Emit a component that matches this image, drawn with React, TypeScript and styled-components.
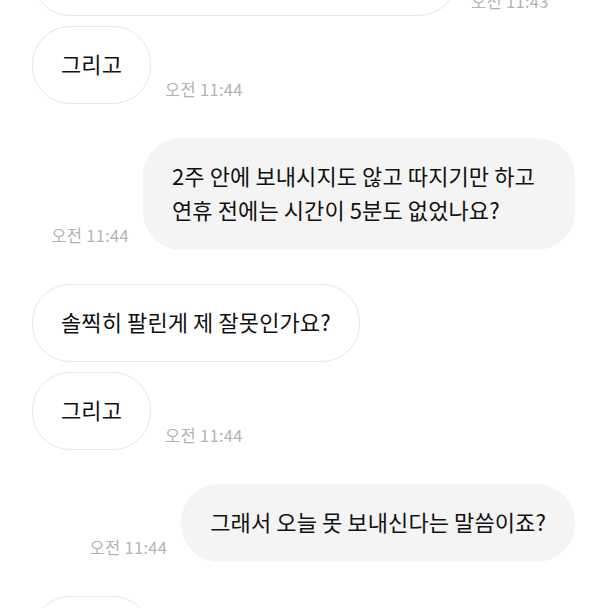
import styled, { createGlobalStyle } from "styled-components";

const GlobalStyle = createGlobalStyle`
  html, body {
    margin: 0;
    padding: 0;
    background: #ffffff;
  }
  body {
    font-family: "Noto Sans CJK KR", "Noto Sans", sans-serif;
    -webkit-font-smoothing: antialiased;
  }
`;

const Screen = styled.div`
  width: 608px;
  height: 608px;
  overflow: hidden;
  background: #ffffff;
`;

// scrolled list: the first message sits mostly above the top edge
const Thread = styled.div`
  display: flex;
  flex-direction: column;
  padding: 0 33px 0 32px;
  margin-top: -62px;
`;

const Row = styled.div<{ $mine?: boolean; $grouped?: boolean }>`
  display: flex;
  align-items: flex-end;
  justify-content: ${(p) => (p.$mine ? "flex-end" : "flex-start")};
  gap: 14px;
  margin-top: ${(p) => (p.$grouped ? "10px" : "34px")};
  &:first-child {
    margin-top: 0;
  }
`;

const Bubble = styled.div<{ $mine?: boolean }>`
  box-sizing: border-box;
  max-width: 432px;
  padding: 19px 28px 23px;
  border-radius: 38px;
  font-size: 22px;
  line-height: 34px;
  letter-spacing: 0.1px;
  color: #111111;
  background: ${(p) => (p.$mine ? "#f4f4f4" : "#ffffff")};
  border: 1px solid ${(p) => (p.$mine ? "#f4f4f4" : "#e6e6e6")};
  word-break: keep-all;
`;

const Time = styled.span`
  flex-shrink: 0;
  font-size: 16.5px;
  line-height: 18px;
  letter-spacing: 0.3px;
  color: #b3b3b3;
  margin-bottom: 6px;
  white-space: nowrap;
`;

type Message = {
  text: string;
  mine?: boolean;
  time?: string;
  grouped?: boolean;
};

const messages: Message[] = [
  { text: "보내주신다고 하셔서 계속 기다렸었어요.", time: "오전 11:43" },
  { text: "그리고", time: "오전 11:44", grouped: true },
  {
    text: "2주 안에 보내시지도 않고 따지기만 하고 연휴 전에는 시간이 5분도 없었나요?",
    mine: true,
    time: "오전 11:44",
  },
  { text: "솔찍히 팔린게 제 잘못인가요?" },
  { text: "그리고", time: "오전 11:44", grouped: true },
  { text: "그래서 오늘 못 보내신다는 말씀이죠?", mine: true, time: "오전 11:44" },
  { text: "아니요" },
];

function App() {
  return (
    <Screen>
      <GlobalStyle />
      <Thread>
        {messages.map((m, i) => (
          <Row key={i} $mine={m.mine} $grouped={m.grouped}>
            {m.mine && m.time && <Time>{m.time}</Time>}
            <Bubble $mine={m.mine}>{m.text}</Bubble>
            {!m.mine && m.time && <Time>{m.time}</Time>}
          </Row>
        ))}
      </Thread>
    </Screen>
  );
}

export default App;
